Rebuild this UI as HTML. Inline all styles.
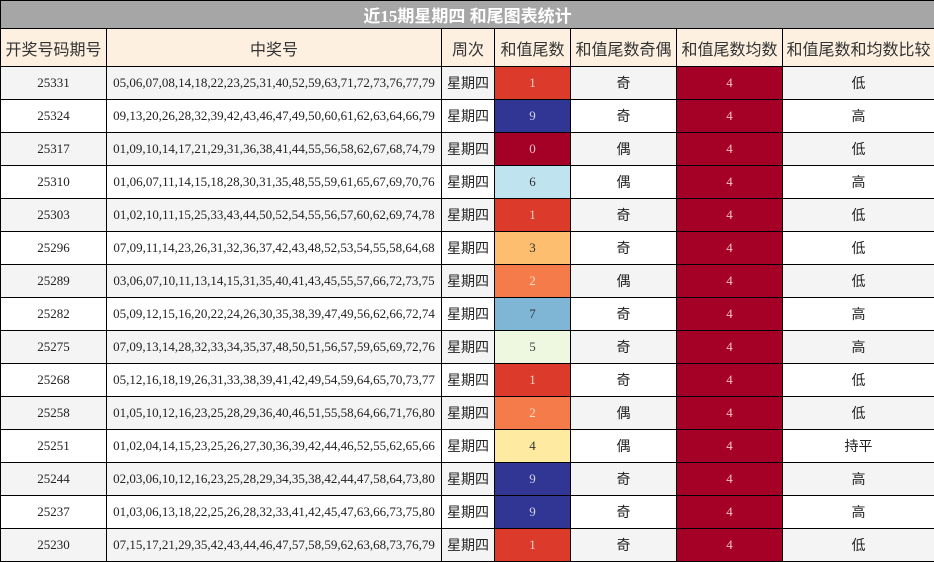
<!DOCTYPE html>
<html><head><meta charset="utf-8"><style>
body{margin:0;width:934px;height:561px;overflow:hidden;background:#fff;font-family:"Liberation Sans","Noto Sans CJK SC",sans-serif}
table{border-collapse:collapse;position:absolute;left:0;top:0;width:934px;table-layout:fixed}
td{border:1px solid #000;text-align:center;padding:0;height:32px;font-size:14px;color:#222}
.t td{height:27px;background:#a6a6a6;color:#fff;font-weight:bold;font-size:17px;font-family:"Liberation Serif","Noto Sans CJK SC",sans-serif}
.h td{height:37px;background:#fdf0e0;font-size:16px;color:#333}
.n{font-family:"Liberation Serif",serif;font-size:13px;color:#222}
tr.o td{background:#f4f4f4}
tr td.c0{background:#a50026;color:#f4c0c0}
tr td.c1{background:#dc3a2b;color:#f8d0c8}
tr td.c2{background:#f67b4a;color:#fde0d0}
tr td.c3{background:#fdbf6f;color:#333}
tr td.c4{background:#feeaa0;color:#333}
tr td.c5{background:#eef7e0;color:#444}
tr td.c6{background:#c0e4ef;color:#333}
tr td.c7{background:#7fb5d5;color:#333}
tr td.c9{background:#313695;color:#d0d0f0}
tr td.a{background:#a50026;color:#f4c0c0}
</style></head><body>
<table>
<colgroup><col style="width:106px"><col style="width:335px"><col style="width:53px"><col style="width:76px"><col style="width:106px"><col style="width:106px"><col style="width:152px"></colgroup>
<tr class="t"><td colspan="7">近15期星期四 和尾图表统计</td></tr>
<tr class="h"><td>开奖号码期号</td><td>中奖号</td><td>周次</td><td>和值尾数</td><td>和值尾数奇偶</td><td>和值尾数均数</td><td>和值尾数和均数比较</td></tr>
<tr class="o"><td class="n">25331</td><td class="n">05,06,07,08,14,18,22,23,25,31,40,52,59,63,71,72,73,76,77,79</td><td>星期四</td><td class="n c1">1</td><td>奇</td><td class="n a">4</td><td>低</td></tr>
<tr><td class="n">25324</td><td class="n">09,13,20,26,28,32,39,42,43,46,47,49,50,60,61,62,63,64,66,79</td><td>星期四</td><td class="n c9">9</td><td>奇</td><td class="n a">4</td><td>高</td></tr>
<tr class="o"><td class="n">25317</td><td class="n">01,09,10,14,17,21,29,31,36,38,41,44,55,56,58,62,67,68,74,79</td><td>星期四</td><td class="n c0">0</td><td>偶</td><td class="n a">4</td><td>低</td></tr>
<tr><td class="n">25310</td><td class="n">01,06,07,11,14,15,18,28,30,31,35,48,55,59,61,65,67,69,70,76</td><td>星期四</td><td class="n c6">6</td><td>偶</td><td class="n a">4</td><td>高</td></tr>
<tr class="o"><td class="n">25303</td><td class="n">01,02,10,11,15,25,33,43,44,50,52,54,55,56,57,60,62,69,74,78</td><td>星期四</td><td class="n c1">1</td><td>奇</td><td class="n a">4</td><td>低</td></tr>
<tr><td class="n">25296</td><td class="n">07,09,11,14,23,26,31,32,36,37,42,43,48,52,53,54,55,58,64,68</td><td>星期四</td><td class="n c3">3</td><td>奇</td><td class="n a">4</td><td>低</td></tr>
<tr class="o"><td class="n">25289</td><td class="n">03,06,07,10,11,13,14,15,31,35,40,41,43,45,55,57,66,72,73,75</td><td>星期四</td><td class="n c2">2</td><td>偶</td><td class="n a">4</td><td>低</td></tr>
<tr><td class="n">25282</td><td class="n">05,09,12,15,16,20,22,24,26,30,35,38,39,47,49,56,62,66,72,74</td><td>星期四</td><td class="n c7">7</td><td>奇</td><td class="n a">4</td><td>高</td></tr>
<tr class="o"><td class="n">25275</td><td class="n">07,09,13,14,28,32,33,34,35,37,48,50,51,56,57,59,65,69,72,76</td><td>星期四</td><td class="n c5">5</td><td>奇</td><td class="n a">4</td><td>高</td></tr>
<tr><td class="n">25268</td><td class="n">05,12,16,18,19,26,31,33,38,39,41,42,49,54,59,64,65,70,73,77</td><td>星期四</td><td class="n c1">1</td><td>奇</td><td class="n a">4</td><td>低</td></tr>
<tr class="o"><td class="n">25258</td><td class="n">01,05,10,12,16,23,25,28,29,36,40,46,51,55,58,64,66,71,76,80</td><td>星期四</td><td class="n c2">2</td><td>偶</td><td class="n a">4</td><td>低</td></tr>
<tr><td class="n">25251</td><td class="n">01,02,04,14,15,23,25,26,27,30,36,39,42,44,46,52,55,62,65,66</td><td>星期四</td><td class="n c4">4</td><td>偶</td><td class="n a">4</td><td>持平</td></tr>
<tr class="o"><td class="n">25244</td><td class="n">02,03,06,10,12,16,23,25,28,29,34,35,38,42,44,47,58,64,73,80</td><td>星期四</td><td class="n c9">9</td><td>奇</td><td class="n a">4</td><td>高</td></tr>
<tr><td class="n">25237</td><td class="n">01,03,06,13,18,22,25,26,28,32,33,41,42,45,47,63,66,73,75,80</td><td>星期四</td><td class="n c9">9</td><td>奇</td><td class="n a">4</td><td>高</td></tr>
<tr class="o"><td class="n">25230</td><td class="n">07,15,17,21,29,35,42,43,44,46,47,57,58,59,62,63,68,73,76,79</td><td>星期四</td><td class="n c1">1</td><td>奇</td><td class="n a">4</td><td>低</td></tr>
</table>
</body></html>
